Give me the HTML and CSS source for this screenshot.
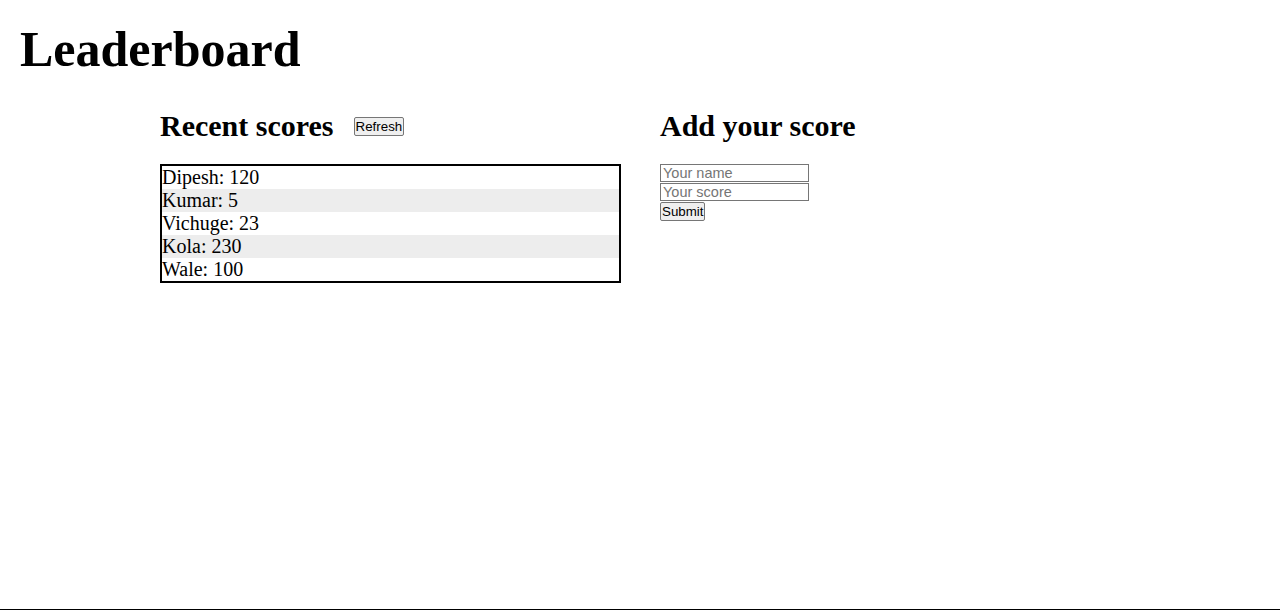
FILE: index.html
```html
<!DOCTYPE html>
<html lang="en">
<head>
<meta charset="utf-8">
<title>Leaderboard</title>
<link rel="stylesheet" href="styles.css">
</head>
<body>
<div class="page">
  <h1 class="title">Leaderboard</h1>
  <main class="columns">
    <section class="panel">
      <div class="panel-head">
        <h2 class="panel-title">Recent scores</h2>
        <button class="btn" type="button">Refresh</button>
      </div>
      <ul class="scores">
        <li class="score">Dipesh: 120</li>
        <li class="score">Kumar: 5</li>
        <li class="score">Vichuge: 23</li>
        <li class="score">Kola: 230</li>
        <li class="score">Wale: 100</li>
      </ul>
    </section>
    <section class="panel">
      <div class="panel-head">
        <h2 class="panel-title">Add your score</h2>
      </div>
      <form class="score-form">
        <input class="field" type="text" placeholder="Your name">
        <input class="field" type="text" placeholder="Your score">
        <button class="btn" type="submit">Submit</button>
      </form>
    </section>
  </main>
</div>
</body>
</html>
```

FILE: styles.css
```css
html, body {
  margin: 0;
  padding: 0;
  background: #fff;
}

body {
  font-family: "Liberation Serif", "Times New Roman", serif;
  font-size: 20px;
  color: #000;
}

.page {
  box-sizing: border-box;
  min-height: 610px;
  padding: 20px 20px 0;
  border-bottom: 1px solid #000;
}

.title {
  margin: 0 0 31px;
  font-size: 50px;
  font-weight: bold;
  line-height: normal;
}

.columns {
  display: grid;
  grid-template-columns: 460px 460px;
  column-gap: 40px;
  width: 960px;
  margin: 0 auto;
}

.panel-head {
  display: flex;
  align-items: center;
  margin-bottom: 21px;
}

.panel-title {
  margin: 0;
  font-size: 30px;
  font-weight: bold;
  line-height: normal;
}

.btn {
  box-sizing: border-box;
  height: 19px;
  padding: 0 1px;
  border: 1px solid #767676;
  border-radius: 2px;
  background: #efefef;
  color: #000;
  font-family: "Liberation Sans", Arial, sans-serif;
  font-size: 13.33px;
  line-height: 15px;
}

.panel-head .btn {
  margin-left: 20px;
}

.scores {
  list-style: none;
  margin: 0;
  padding: 0;
  border: 2px solid #000;
  width: 457px;
}

.score {
  line-height: 23px;
}

.score:nth-child(even) {
  background: #ededed;
}

.score-form {
  display: flex;
  flex-direction: column;
  align-items: flex-start;
}

.field {
  box-sizing: border-box;
  width: 149px;
  height: 18px;
  margin: 0 0 1px;
  padding: 0 2px;
  border: 1px solid #767676;
  font-family: "Liberation Sans", Arial, sans-serif;
  font-size: 14.5px;
  line-height: 16px;
  color: #000;
}

.field::placeholder {
  color: #757575;
}
```
